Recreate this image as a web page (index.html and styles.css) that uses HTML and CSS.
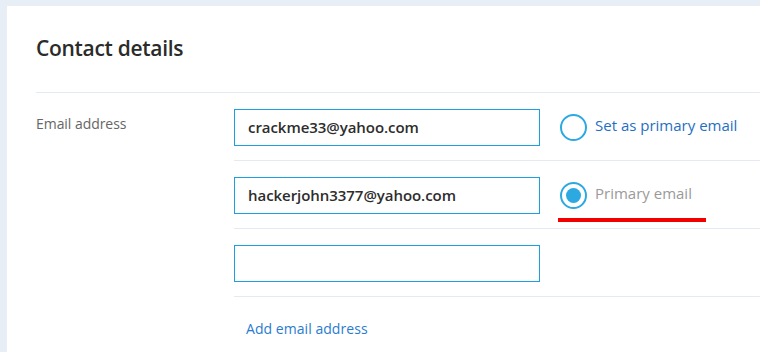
FILE: index.html
```html
<!DOCTYPE html>
<html lang="en">
<head>
<meta charset="utf-8">
<title>Contact details</title>
<link rel="stylesheet" href="styles.css">
</head>
<body>
<div class="card">
  <h1 class="title">Contact details</h1>
  <div class="section">
    <div class="label">Email address</div>
    <div class="emails">
      <div class="email-row">
        <div class="input">crackme33@yahoo.com</div>
        <div class="option">
          <span class="radio"></span>
          <span class="option-text link">Set as primary email</span>
        </div>
      </div>
      <div class="email-row">
        <div class="input">hackerjohn3377@yahoo.com</div>
        <div class="option">
          <span class="radio checked"></span>
          <span class="option-text muted">Primary email</span>
          <span class="mark"></span>
        </div>
      </div>
      <div class="email-row">
        <div class="input"></div>
      </div>
      <div class="add-row">
        <span class="add-link">Add email address</span>
      </div>
    </div>
  </div>
</div>
</body>
</html>
```

FILE: styles.css
```css
html, body {
  margin: 0;
  padding: 0;
}
body {
  background: #e7eef6;
  font-family: "Open Sans", "Noto Sans", sans-serif;
  height: 352px;
  overflow: hidden;
}
.card {
  margin: 6px 0 0 7px;
  background: #ffffff;
  padding: 0 0 0 29px;
  height: 346px;
  box-sizing: border-box;
}
.title {
  margin: 0;
  padding: 27px 0 0 0;
  height: 59px;
  font-size: 21px;
  font-weight: 600;
  color: #2b2b2b;
  line-height: 30px;
  letter-spacing: -0.3px;
  border-bottom: 1px solid #e3eaf1;
  box-sizing: content-box;
}
.section {
  display: grid;
  grid-template-columns: 198px 1fr;
}
.label {
  padding-top: 21px;
  font-size: 14px;
  line-height: 20px;
  color: #666666;
  letter-spacing: -0.05px;
}
.email-row {
  display: flex;
  align-items: center;
  padding: 16px 0 14px 0;
  border-bottom: 1px solid #e3eaf1;
}
.input {
  box-sizing: border-box;
  width: 306px;
  height: 37px;
  border: 1px solid #1da0e0;
  padding: 0 13px;
  font-size: 15px;
  line-height: 35px;
  font-weight: 600;
  color: #2d2d2d;
  letter-spacing: -0.05px;
}
.option {
  position: relative;
  display: flex;
  align-items: center;
  margin-left: 20px;
}
.radio {
  box-sizing: border-box;
  width: 27px;
  height: 27px;
  border: 2px solid #2ca9e1;
  border-radius: 50%;
  display: flex;
  align-items: center;
  justify-content: center;
}
.radio.checked::after {
  content: "";
  width: 15px;
  height: 15px;
  border-radius: 50%;
  background: #2ca9e1;
}
.option-text {
  margin-left: 8px;
  font-size: 15px;
  line-height: 20px;
  letter-spacing: 0;
  position: relative;
  top: -3px;
}
.link {
  color: #1f6fc2;
}
.muted {
  color: #9a9a9a;
}
.mark {
  position: absolute;
  left: -2px;
  top: 36px;
  width: 148px;
  height: 4px;
  background: #f20000;
}
.add-row {
  padding: 20px 0 0 12px;
}
.add-link {
  font-size: 14px;
  line-height: 20px;
  color: #2a7bd0;
  letter-spacing: 0.05px;
}
```
